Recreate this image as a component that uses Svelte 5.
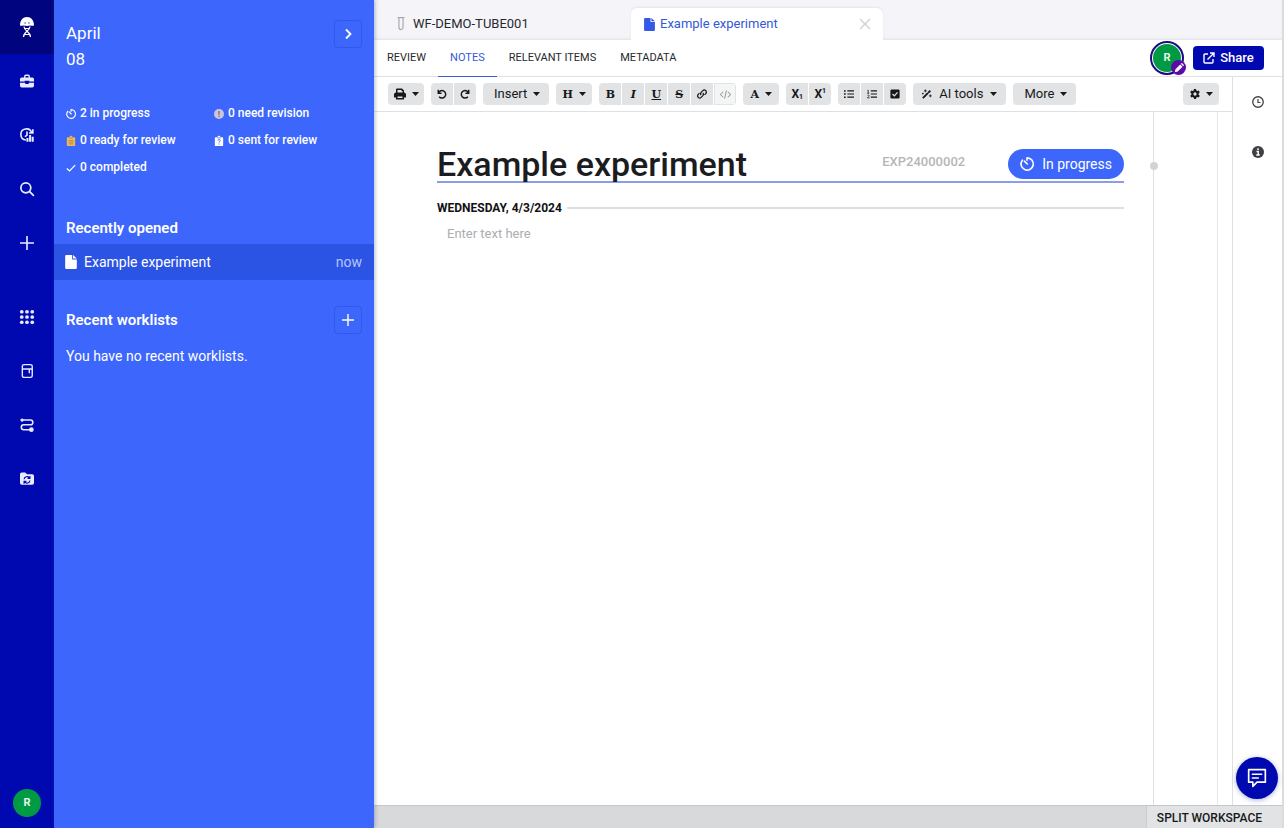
<script>
    const line = 'fill="none" stroke="currentColor" stroke-width="2" stroke-linecap="round" stroke-linejoin="round"';

    // Inner markup for each icon, drawn on a 24x24 grid
    const icons = {
        briefcase: '<path fill="currentColor" d="M7 6V4a3 3 0 0 1 3-3h4a3 3 0 0 1 3 3v2h4a3 3 0 0 1 3 3v4h-8v-1.500H8V13H0V9a3 3 0 0 1 3-3zm2.500 0h5V3.500h-5zM0 14.800h9V17h6v-2.200h9V20a3 3 0 0 1-3 3H3a3 3 0 0 1-3-3z"/>',
        insights: '<path d="M10 20.500A9.500 9.500 0 1 1 20 8M22 2v6.500h-6.500M12 6v6l-3.500 3" fill="none" stroke="currentColor" stroke-width="2.800"/><path d="M11 17h3.500v6.500H11zM15.500 12h3.500v11.500h-3.500zM20 15h3.500v8.500H20z" fill="currentColor"/>',
        search: '<g fill="none" stroke="currentColor" stroke-width="3" stroke-linecap="round"><circle cx="10" cy="10" r="8.500"/><path d="M16.500 16.500l6.500 6.500"/></g>',
        plus: '<path d="M12 0v24M0 12h24" fill="none" stroke="currentColor" stroke-width="2.800"/>',
        grid: '<g fill="currentColor"><circle cx="3" cy="3" r="3.200"/><circle cx="12" cy="3" r="3.200"/><circle cx="21" cy="3" r="3.200"/><circle cx="3" cy="12" r="3.200"/><circle cx="12" cy="12" r="3.200"/><circle cx="21" cy="12" r="3.200"/><circle cx="3" cy="21" r="3.200"/><circle cx="12" cy="21" r="3.200"/><circle cx="21" cy="21" r="3.200"/></g>',
        fridge: '<g fill="none" stroke="currentColor" stroke-width="2.400"><rect x="4" y="1" width="17" height="22" rx="3"/><path d="M4 8.500h17M12 8.500h4V16"/></g>',
        route: '<path d="M3 3.500h15a4 4 0 0 1 0 8H6.500a4 4 0 0 0 0 8.500H19" fill="none" stroke="currentColor" stroke-width="2.600"/><circle cx="3.500" cy="3.500" r="2.800" fill="currentColor"/><circle cx="19.500" cy="20" r="4" fill="currentColor"/>',
        folder: '<path fill="currentColor" d="M3 1h6l3 3h9a3 3 0 0 1 3 3v12a3 3 0 0 1-3 3H3a3 3 0 0 1-3-3V4a3 3 0 0 1 3-3z"/><path d="M7 12.500a5 5 0 0 1 9-2.500M17 14.500a5 5 0 0 1-9 2.500M17 7v4h-4M7 20v-4h4" fill="none" stroke="#0009b0" stroke-width="2"/>',
        right: '<path d="M8 3l9 9-9 9" fill="none" stroke="currentColor" stroke-width="3.600"/>',
        progress: '<path d="M12 1.500V5.500M12 1.500A10.500 10.500 0 1 1 4 5.500M7.500 7l5 5" fill="none" stroke="currentColor" stroke-width="2.800" stroke-linecap="round"/>',
        revision: '<circle cx="12" cy="12" r="12" fill="#c9c6dc"/><path d="M12 5v8.500M12 16v3" stroke="#8a5f78" stroke-width="3"/>',
        ready: '<path d="M4 3h4.500a3.500 3.500 0 0 1 7 0H20a2 2 0 0 1 2 2v17a2 2 0 0 1-2 2H4a2 2 0 0 1-2-2V5a2 2 0 0 1 2-2z" fill="#edb855"/><path d="M8 4.500h8M6.500 11h11M6.500 15h11M6.500 19h11" stroke="#a98248" stroke-width="1.800"/>',
        sent: '<path d="M4 3h4.500a3.500 3.500 0 0 1 7 0H20a2 2 0 0 1 2 2v17a2 2 0 0 1-2 2H4a2 2 0 0 1-2-2V5a2 2 0 0 1 2-2z" fill="currentColor"/><path d="M8 4.500h8M9 11q0-2.500 3-2.500t3 2.500q0 2-3 3.500v1.500M12 18v2.500" fill="none" stroke="#3c66fc" stroke-width="2"/>',
        check: '<path d="M2 13l6.500 6L22 5" fill="none" stroke="currentColor" stroke-width="3"/>',
        file: '<path fill="currentColor" d="M2 2a2 2 0 0 1 2-2h10v7.500h8V22a2 2 0 0 1-2 2H4a2 2 0 0 1-2-2zM15.500 0l6.500 6h-6.500z"/>',
        tube: '<path d="M6 1h12M8.500 1.500v16.500a3.500 3.500 0 0 0 7 0V1.500" fill="none" stroke="currentColor" stroke-width="2"/>',
        close: '<path d="M2 2l20 20M22 2L2 22" fill="none" stroke="currentColor" stroke-width="2.800"/>',
        print: '<path fill="currentColor" fill-rule="evenodd" d="M4 9V3a2 2 0 0 1 2-2h10l4 4v4a4 4 0 0 1 4 4v6h-4v4H4v-4H0v-6a4 4 0 0 1 4-4zm3-5v5h10V6h-2V4zm0 13v3h10v-3z"/>',
        undo: '<path d="M3 2v8h8M3.500 9.500A9 9 0 1 1 5 18.500" fill="none" stroke="currentColor" stroke-width="3.400"/>',
        redo: '<path d="M21 2v8h-8M20.500 9.500A9 9 0 1 0 19 18.500" fill="none" stroke="currentColor" stroke-width="3.400"/>',
        link: '<g fill="none" stroke="currentColor" stroke-width="3"><path d="M10 14.500a4.500 4.500 0 0 1 0-6.500l4-4a4.800 4.800 0 0 1 7 7l-3 3"/><path d="M14 9.500a4.500 4.500 0 0 1 0 6.500l-4 4a4.800 4.800 0 0 1-7-7l3-3"/></g>',
        code: '<path d="M7 6l-6 6 6 6M17 6l6 6-6 6M14 3l-4 18" fill="none" stroke="currentColor" stroke-width="2.200"/>',
        bullets: '<path d="M8 4.500h16M8 12h16M8 19.500h16" stroke="currentColor" stroke-width="2.800"/><path d="M0 3h4v3.500H0zM0 10.300h4v3.500H0zM0 17.800h4v3.500H0z" fill="currentColor"/>',
        numbers: '<path d="M9 4.500h15M9 12h15M9 19.500h15" stroke="currentColor" stroke-width="2.800"/><path d="M1 3h2v7M0 10h5.500M1 15q4-2 4 1 0 2-4 5.500h5" fill="none" stroke="currentColor" stroke-width="1.800"/>',
        checkbox: '<rect x="1" y="1" width="22" height="22" rx="3" fill="currentColor"/><path d="M6 12l4.500 4.500L18 8" fill="none" stroke="#e2e3e5" stroke-width="3"/>',
        wand: '<path d="M2 22L20 4" stroke="currentColor" stroke-width="4.500"/><path d="M13 8l3 3" stroke="#e2e3e5" stroke-width="1.500"/><path d="M8 1v7M4.500 4.500h7M20 13v7M16.500 16.500h7M2 9v4M0 11h4" stroke="currentColor" stroke-width="2"/>',
        gear: '<path fill="currentColor" fill-rule="evenodd" d="M9.500 0h5l.7 3.600 2.300 1.300L21 3.700 23.500 8l-2.800 2.500v3l2.800 2.500-2.500 4.300-3.500-1.200-2.300 1.300-.7 3.600h-5l-.7-3.600-2.300-1.300L3 20.300.5 16l2.800-2.500v-3L.5 8 3 3.700l3.500 1.200 2.300-1.300zM12 8a4 4 0 1 0 0 8 4 4 0 0 0 0-8z"/>',
        share: '<path d="M10 4H4a2 2 0 0 0-2 2v14a2 2 0 0 0 2 2h14a2 2 0 0 0 2-2v-6M14 2h8v8M22 2L9 15" fill="none" stroke="currentColor" stroke-width="2.800"/>',
        pencil: '<path fill="currentColor" d="M2 22l1.500-7L15 3.500 20.500 9 9 20.500zM16.500 2L19 0l5 5-2 2.500z"/>',
        clock: '<circle cx="12" cy="12" r="10.500" fill="none" stroke="currentColor" stroke-width="2.600"/><path d="M12 6v7h5" fill="none" stroke="currentColor" stroke-width="2.400"/>',
        info: '<circle cx="12" cy="12" r="12" fill="currentColor"/><path d="M12 4.500v3.500M9 11h3.500v7M8.500 18h7" fill="none" stroke="#fff" stroke-width="3"/>',
        chat: `<path d="M2 2h20v15H12l-5 5v-5H2zM6.500 7.500h11M6.500 12h7" ${line}/>`
    };

    const railTop = [
        ['briefcase', 'Workspace'],
        ['insights', 'Insights'],
        ['search', 'Search'],
        ['plus', 'Create']
    ];
    const railBottom = [
        ['grid', 'Apps'],
        ['fridge', 'Inventory'],
        ['route', 'Workflows'],
        ['folder', 'Requests']
    ];
    const stats = [
        ['progress', '2 in progress'],
        ['revision', '0 need revision'],
        ['ready', '0 ready for review'],
        ['sent', '0 sent for review'],
        ['check', '0 completed']
    ];
    const views = ['REVIEW', 'NOTES', 'RELEVANT ITEMS', 'METADATA'];

    let activeView = $state('NOTES');
    let title = $state('Example experiment');
    let notes = $state('');
</script>

{#snippet icon(name, size = 14)}
    <svg width={size} height={size} viewBox="0 0 24 24" aria-hidden="true">{@html icons[name]}</svg>
{/snippet}

{#snippet caret()}
    <svg width="7" height="4" viewBox="0 0 7 4" aria-hidden="true"><path d="M0 0h7L3.500 4z" fill="currentColor" /></svg>
{/snippet}

<div class="app">
    <nav class="rail" aria-label="Main">
        <a class="logo" href="#home" aria-label="Home">
            <svg width="16" height="22" viewBox="0 0 16 22" aria-hidden="true">
                <path d="M1 9.500C1 4 4 1 8 1s7 3 7 8.500c-1.500.8-2.500-.3-4 0-2 .6-4 .6-6 0-1.500-.3-2.500.8-4 0z" fill="#fff" />
                <path d="M5.500 7h1.200M9.300 7h1.200" stroke="#00057f" stroke-width="1" />
                <path d="M5 10.500c0 5 6.500 4.500 6.500 10.500M11 10.500c0 5-6.500 4.500-6.500 10.500M6 12.500h4M6 18.500h4" fill="none" stroke="#fff" stroke-width="1.200" />
            </svg>
        </a>
        {#each railTop as [name, label]}
            <button class="rail-item" aria-label={label}>{@render icon(name)}</button>
        {/each}
        <div class="rail-gap"></div>
        {#each railBottom as [name, label]}
            <button class="rail-item" aria-label={label}>{@render icon(name)}</button>
        {/each}
        <button class="avatar account" aria-label="Account">R</button>
    </nav>

    <aside class="panel">
        <header class="panel-head">
            <div class="date">April<br />08</div>
            <button class="square" aria-label="Next">{@render icon('right', 12)}</button>
        </header>
        <ul class="stats">
            {#each stats as [name, label]}
                <li>{@render icon(name, 10)}{label}</li>
            {/each}
        </ul>
        <h2 class="recent">Recently opened</h2>
        <a class="entry" href="#experiment">
            {@render icon('file')}
            <span>Example experiment</span>
            <time>now</time>
        </a>
        <div class="worklists">
            <h2>Recent worklists</h2>
            <button class="square" aria-label="Add worklist">{@render icon('plus', 12)}</button>
        </div>
        <p class="empty">You have no recent worklists.</p>
    </aside>

    <main>
        <div class="tabs">
            <a class="tab" href="#tube">{@render icon('tube')}WF-DEMO-TUBE001</a>
            <div class="tab current">
                <a href="#experiment">{@render icon('file', 13)}Example experiment</a>
                <button class="close" aria-label="Close tab">{@render icon('close', 12)}</button>
            </div>
        </div>

        <div class="subnav">
            <div class="views">
                {#each views as view}
                    <button class:active={view === activeView} onclick={() => (activeView = view)}>{view}</button>
                {/each}
            </div>
            <div class="editor-avatar">
                <span class="avatar">R</span>
                <span class="badge">{@render icon('pencil', 10)}</span>
            </div>
            <button class="share">{@render icon('share', 12)}Share</button>
        </div>

        <div class="work">
            <div class="editor">
                <div class="toolbar">
                    <div class="group"><button class="menu" aria-label="Print">{@render icon('print', 12)}{@render caret()}</button></div>
                    <div class="group">
                        <button aria-label="Undo">{@render icon('undo', 10)}</button>
                        <button aria-label="Redo">{@render icon('redo', 10)}</button>
                    </div>
                    <div class="group"><button class="wide">Insert{@render caret()}</button></div>
                    <div class="group"><button class="menu serif" aria-label="Heading">H{@render caret()}</button></div>
                    <div class="group">
                        <button class="serif" aria-label="Bold">B</button>
                        <button class="serif italic" aria-label="Italic">I</button>
                        <button class="serif underline" aria-label="Underline">U</button>
                        <button class="serif strike" aria-label="Strikethrough">S</button>
                        <button aria-label="Link">{@render icon('link', 10)}</button>
                        <button aria-label="Code" disabled>{@render icon('code', 11)}</button>
                    </div>
                    <div class="group"><button class="menu serif" aria-label="Text colour">A{@render caret()}</button></div>
                    <div class="group">
                        <button class="script" aria-label="Subscript">X<sub>1</sub></button>
                        <button class="script" aria-label="Superscript">X<sup>1</sup></button>
                    </div>
                    <div class="group">
                        <button aria-label="Bulleted list">{@render icon('bullets', 10)}</button>
                        <button aria-label="Numbered list">{@render icon('numbers', 10)}</button>
                        <button aria-label="Checklist">{@render icon('checkbox', 10)}</button>
                    </div>
                    <div class="group"><button class="tools">{@render icon('wand', 10)}AI tools{@render caret()}</button></div>
                    <div class="group"><button class="wide">More{@render caret()}</button></div>
                    <div class="group settings"><button class="menu" aria-label="Settings">{@render icon('gear', 10)}{@render caret()}</button></div>
                </div>

                <div class="canvas">
                    <article>
                        <div class="heading">
                            <input class="title" aria-label="Title" bind:value={title} />
                            <span class="code">EXP24000002</span>
                            <button class="status">{@render icon('progress')}In progress</button>
                        </div>
                        <div class="day">WEDNESDAY, 4/3/2024</div>
                        <textarea aria-label="Notes" placeholder="Enter text here" bind:value={notes}></textarea>
                    </article>
                    <div class="margin"><span class="dot"></span></div>
                    <div class="gutter"></div>
                </div>
            </div>
            <div class="side">
                <button aria-label="History">{@render icon('clock', 12)}</button>
                <button aria-label="Information">{@render icon('info', 12)}</button>
            </div>
        </div>

        <footer><button>SPLIT WORKSPACE</button></footer>
    </main>

    <button class="chat" aria-label="Open chat">{@render icon('chat', 20)}</button>
</div>

<style>
    :global(body) {
        margin: 0;
    }

    .app {
        display: grid;
        grid-template-columns: 54px 320px 1fr;
        min-height: 100vh;
        box-sizing: border-box;
        border-right: 2px solid #dcdcdf;
        background: #fff;
        color: #28292c;
        font: 14px/20px Roboto, sans-serif;
    }

    button {
        display: flex;
        align-items: center;
        justify-content: center;
        padding: 0;
        border: 0;
        background: none;
        color: inherit;
        font: inherit;
        cursor: pointer;
    }

    a {
        color: inherit;
        text-decoration: none;
    }

    svg {
        flex: none;
        overflow: visible;
    }

    h2 {
        margin: 0;
        font-size: 15px;
        font-weight: 600;
    }

    .rail {
        display: flex;
        flex-direction: column;
        align-items: center;
        background: #0009b0;
        color: #e6ebff;
    }

    .logo {
        display: flex;
        align-items: center;
        justify-content: center;
        width: 100%;
        height: 54px;
        background: #00057f;
    }

    .rail-item {
        width: 100%;
        height: 54px;
    }

    .rail-gap {
        height: 20px;
    }

    .avatar {
        display: flex;
        align-items: center;
        justify-content: center;
        width: 28px;
        height: 28px;
        border-radius: 50%;
        background: #009a44;
        color: #e4f8ea;
        font-size: 11px;
        font-weight: 700;
    }

    .account {
        margin: auto 0 11px;
    }

    .panel {
        z-index: 1;
        background: #3c66fc;
        box-shadow: 1px 0 4px rgba(60, 80, 140, 0.4);
        color: #fff;
    }

    .panel-head {
        display: flex;
        justify-content: space-between;
        padding: 20px 12px 0;
    }

    .date {
        font-size: 17px;
        line-height: 26px;
    }

    .square {
        width: 28px;
        height: 28px;
        box-sizing: border-box;
        border: 1px solid #3158e8;
        border-radius: 4px;
    }

    .stats {
        display: grid;
        grid-template-columns: 1fr 1fr;
        margin: 28px 12px 0;
        padding: 0;
        list-style: none;
        font-size: 12px;
        font-weight: 500;
        line-height: 27px;
    }

    .stats li {
        display: flex;
        align-items: center;
        gap: 4px;
    }

    .recent {
        margin: 37px 12px 6px;
    }

    .entry {
        display: flex;
        align-items: center;
        gap: 6px;
        height: 36px;
        padding: 0 12px 0 10px;
        background: #2b53e4;
    }

    .entry time {
        margin-left: auto;
        color: #b7c7ff;
    }

    .worklists {
        display: flex;
        align-items: center;
        justify-content: space-between;
        padding: 26px 12px 0;
    }

    .empty {
        margin: 12px;
    }

    main {
        display: flex;
        flex-direction: column;
        min-width: 0;
    }

    .tabs {
        display: flex;
        align-items: flex-end;
        height: 40px;
        background: #f4f4f9;
        box-shadow: inset 0 -2px 3px -1px #dfe0e5;
        font-size: 13px;
    }

    .tab {
        display: flex;
        align-items: center;
        gap: 5px;
        box-sizing: border-box;
        width: 257px;
        height: 32px;
        padding-left: 20px;
    }

    .tab svg {
        color: #a9aaad;
    }

    .current {
        justify-content: space-between;
        width: 252px;
        padding: 0 12px;
        border-radius: 6px 6px 0 0;
        background: #fff;
        box-shadow: 0 -1px 2px #e4e5ea;
        color: #3459d6;
    }

    .current a {
        display: flex;
        align-items: center;
        gap: 4px;
    }

    .current a svg {
        color: #3459e6;
    }

    .current .close :global(svg) {
        color: #cfd0d3;
    }

    .subnav {
        display: flex;
        align-items: center;
        height: 36px;
        padding-right: 18px;
        border-bottom: 1px solid #dfe0e3;
    }

    .views {
        display: flex;
        align-self: stretch;
        margin-right: auto;
        padding-left: 1px;
        font-size: 11px;
    }

    .views button {
        padding: 0 12px;
        border-bottom: 1px solid transparent;
        margin-bottom: -1px;
    }

    .views .active {
        border-color: #3c5fd0;
        color: #3459d6;
    }

    .editor-avatar {
        position: relative;
        margin-right: 9px;
        border: 2px solid #1a0a82;
        border-radius: 50%;
        padding: 1px;
    }

    .badge {
        position: absolute;
        right: -4px;
        bottom: -2px;
        display: flex;
        align-items: center;
        justify-content: center;
        width: 15px;
        height: 15px;
        border-radius: 50%;
        background: #5b0ba8;
        color: #fff;
    }

    .share {
        gap: 5px;
        width: 71px;
        height: 24px;
        border-radius: 4px;
        background: #0009b0;
        color: #fff;
        font-size: 13px;
        font-weight: 500;
    }

    .work {
        display: flex;
        flex: 1;
    }

    .editor {
        display: flex;
        flex: 1;
        flex-direction: column;
        min-width: 0;
    }

    .toolbar {
        display: flex;
        align-items: center;
        gap: 7px;
        height: 34px;
        padding: 0 13px 0 14px;
        border-bottom: 1px solid #dfe0e3;
        color: #17181a;
        font-size: 13px;
    }

    .group {
        display: flex;
        gap: 1px;
        overflow: hidden;
        border-radius: 4px;
    }

    .settings {
        margin-left: auto;
    }

    .group button {
        width: 22px;
        height: 22px;
        background: #e2e3e5;
    }

    .group button:disabled {
        box-sizing: border-box;
        border: 1px solid #e2e3e5;
        background: #f4f5f5;
        color: #98999c;
    }

    .group .menu {
        gap: 6px;
        width: 36px;
    }

    .group .wide {
        gap: 6px;
        width: auto;
        padding: 0 9px 0 11px;
    }

    .group .tools {
        gap: 7px;
        width: auto;
        padding: 0 9px;
    }

    .group .serif {
        font: bold 11px "DejaVu Serif", serif;
    }

    .group .italic {
        font-style: italic;
    }

    .group .underline {
        text-decoration: underline;
    }

    .group .strike {
        text-decoration: line-through;
    }

    .group .script {
        font-size: 12px;
        font-weight: 700;
    }

    .script sub,
    .script sup {
        font-size: 7px;
        line-height: 8px;
    }

    .script sub {
        align-self: flex-end;
        margin-bottom: 4px;
    }

    .script sup {
        align-self: flex-start;
        margin-top: 4px;
    }

    .canvas {
        display: flex;
        flex: 1;
    }

    article {
        display: flex;
        flex: 1;
        flex-direction: column;
        min-width: 0;
        padding: 34px 29px 0 63px;
    }

    .heading {
        display: flex;
        align-items: center;
        height: 35px;
        border-bottom: 2px solid #8b9ce8;
    }

    .title {
        flex: 1;
        min-width: 0;
        height: 36px;
        padding: 0;
        border: 0;
        outline: 0;
        background: none;
        color: #1b1c1f;
        font: 500 34px/36px Roboto, sans-serif;
    }

    .code {
        margin: 0 43px 4px 0;
        color: #b5b6b9;
        font-size: 13px;
        font-weight: 500;
    }

    .status {
        gap: 8px;
        height: 30px;
        padding: 0 12px;
        border-radius: 15px;
        background: #3c66fc;
        color: #fff;
    }

    .day {
        display: flex;
        align-items: center;
        gap: 5px;
        margin-top: 15px;
        color: #111214;
        font-size: 12px;
        font-weight: 700;
    }

    .day::after {
        flex: 1;
        height: 2px;
        background: #dcdfe0;
        content: "";
    }

    textarea {
        flex: 1;
        margin-top: 6px;
        padding: 0 10px;
        border: 0;
        outline: 0;
        background: none;
        resize: none;
        font: 13px/20px Roboto, sans-serif;
    }

    textarea::placeholder {
        color: #acadb0;
    }

    .margin {
        position: relative;
        width: 63px;
        border-left: 1px solid #dfdfe1;
    }

    .dot {
        position: absolute;
        top: 50px;
        left: -4px;
        width: 8px;
        height: 8px;
        border-radius: 50%;
        background: #d2d3d6;
    }

    .gutter {
        width: 14px;
        border-left: 1px solid #e6e6e8;
    }

    .side {
        display: flex;
        flex-direction: column;
        width: 49px;
        border-left: 1px solid #dfdfe1;
        color: #3e4044;
    }

    .side button {
        height: 50px;
    }

    footer {
        display: flex;
        justify-content: flex-end;
        height: 22px;
        border-top: 1px solid #c5c6c9;
        background: #d8d9db;
    }

    footer button {
        height: 24px;
        padding: 0 20px 0 10px;
        border-left: 1px solid #cccdd0;
        background: #e2e3e5;
        color: #17181a;
        font-size: 12px;
        font-weight: 500;
    }

    .chat {
        position: fixed;
        right: 6px;
        bottom: 29px;
        z-index: 2;
        width: 42px;
        height: 42px;
        border-radius: 50%;
        background: #0009b0;
        box-shadow: 0 1px 5px rgba(40, 60, 140, 0.4);
        color: #fff;
    }
</style>
